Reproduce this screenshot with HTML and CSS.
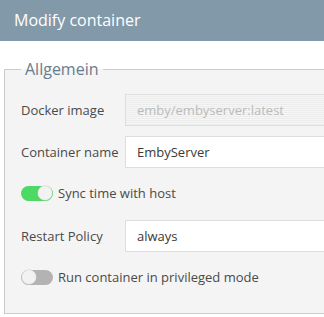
FILE: index.html
```html
<!DOCTYPE html>
<html>
<head>
<meta charset="utf-8">
<link rel="stylesheet" href="styles.css">
</head>
<body>
<header class="titlebar">Modify container</header>
<fieldset class="group">
  <legend class="group-title">Allgemein</legend>
  <div class="form">
    <div class="row">
      <label class="label">Docker image</label>
      <div class="input input-disabled">emby/embyserver:latest</div>
    </div>
    <div class="row">
      <label class="label">Container name</label>
      <div class="input">EmbyServer</div>
    </div>
    <div class="toggle-row toggle-row-first">
      <span class="switch switch-on"><span class="knob"></span></span>
      <span class="toggle-text">Sync time with host</span>
    </div>
    <div class="row row-after-toggle">
      <label class="label">Restart Policy</label>
      <div class="input">always</div>
    </div>
    <div class="toggle-row">
      <span class="switch"><span class="knob"></span></span>
      <span class="toggle-text">Run container in privileged mode</span>
    </div>
  </div>
</fieldset>
</body>
</html>
```
FILE: styles.css
```css
html, body {
  margin: 0;
  padding: 0;
  background: #ffffff;
  overflow: hidden;
  font-family: "Open Sans", "Noto Sans", sans-serif;
}
body {
  width: 324px;
  height: 317px;
}
.titlebar {
  height: 41px;
  background: #8299aa;
  color: #ffffff;
  font-size: 16px;
  line-height: 41px;
  padding-left: 14px;
}
.group {
  margin: 17px 0 0 4px;
  width: 320px;
  box-sizing: border-box;
  border: 1px solid #cccccc;
  border-right: none;
  background: #f4f4f4;
  padding: 14px 0 26px 16px;
  min-width: 0;
}
.group-title {
  padding: 0 4px;
  font-size: 16px;
  line-height: 22px;
  color: #687d8d;
}
.form {
  display: flex;
  flex-direction: column;
}
.row {
  display: flex;
  align-items: center;
  height: 32px;
  margin-bottom: 10px;
}
.row-after-toggle {
  margin-top: 17px;
  margin-bottom: 15px;
}
.label {
  width: 104px;
  font-size: 13px;
  color: #4a4a4a;
}
.input {
  flex: 1;
  height: 32px;
  box-sizing: border-box;
  border: 1px solid #dddddd;
  border-right: none;
  background: #ffffff;
  font-size: 13px;
  line-height: 30px;
  padding-left: 11px;
  color: #3a3a3a;
  white-space: nowrap;
}
.input-disabled {
  color: #bbbbbb;
  border-color: #dedede;
  background: repeating-linear-gradient(to bottom, #f6f6f6 0, #f6f6f6 1px, #ececec 1px, #ececec 2px);
}
.toggle-row {
  display: flex;
  align-items: center;
  height: 20px;
  gap: 5px;
}
.toggle-row-first {
  margin-top: 5px;
}
.switch {
  width: 32px;
  height: 15px;
  border-radius: 8px;
  background: #b3b3b3;
  display: flex;
  align-items: center;
  padding: 0 1px;
  box-sizing: border-box;
  justify-content: flex-start;
}
.switch-on {
  background: #4cd964;
  justify-content: flex-end;
}
.knob {
  width: 14px;
  height: 14px;
  border-radius: 50%;
  background: #f2f2f2;
  box-shadow: 0 0 0 0.5px #cfcfcf;
}
.toggle-text {
  font-size: 13px;
  color: #4a4a4a;
}
```
